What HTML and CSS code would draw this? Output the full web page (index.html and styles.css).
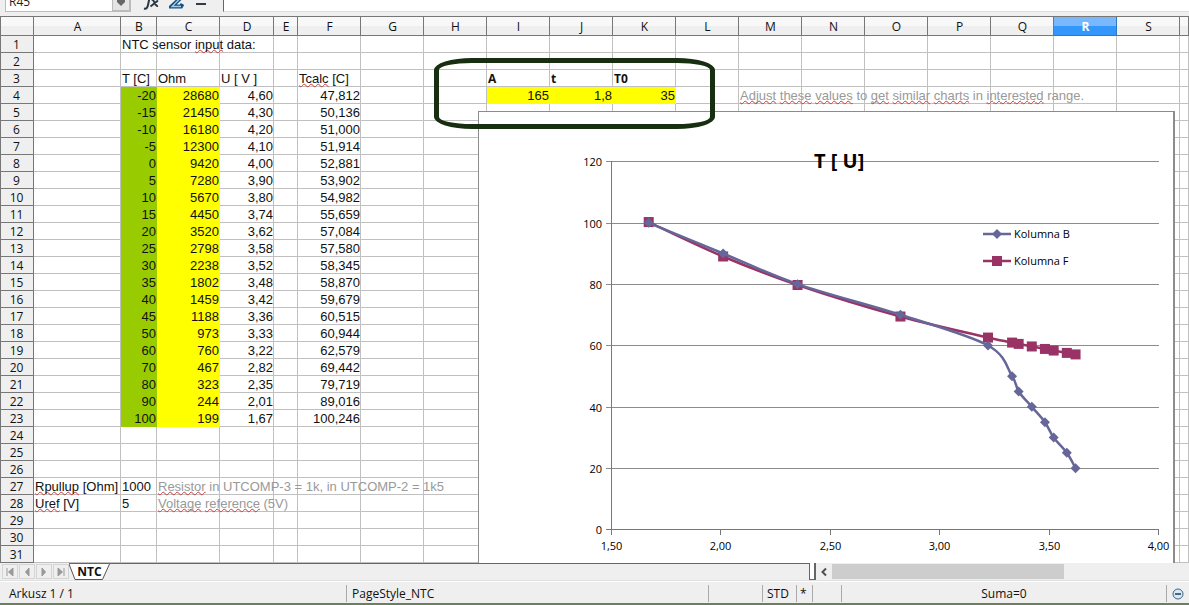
FILE: index.html
```html
<!DOCTYPE html>
<html lang="en">
<head>
<meta charset="utf-8">
<title>NTC</title>
<link rel="stylesheet" href="styles.css">
</head>
<body>
<div class="app">
  <header class="formula-bar">
    <div class="name-box">
      <input class="name-input" type="text" value="R45" aria-label="Name box">
      <button class="name-arrow" type="button" aria-label="Choose range">
        <svg width="16" height="22" viewBox="0 0 16 22"><path d="M4 8h8v2l-4 4-4-4z" fill="#666"/></svg>
      </button>
    </div>
    <button class="tool tool-fx" type="button" aria-label="Function wizard">
      <svg width="18" height="20" viewBox="0 0 18 20"><path d="M2 16.500c2.500.8 3.500-1 4-3.500l1.600-7.500c.5-2 1.500-3 3.500-2.500" fill="none" stroke="#2b3947" stroke-width="2"/><path d="M9.500 8c3-1.500 3 7 6.500 6M16 8.500l-7.500 6" fill="none" stroke="#2b3947" stroke-width="2"/></svg>
    </button>
    <button class="tool tool-sum" type="button" aria-label="Sum">
      <svg width="16" height="20" viewBox="0 0 16 20"><path d="M13 1H4l6 6.500-7.500 7H12l1.500-2.500" fill="none" stroke="#17507f" stroke-width="4"/><path d="M13 1H4l6 6.500-7 7h9" fill="none" stroke="#9fcdea" stroke-width="1.300"/></svg>
    </button>
    <button class="tool tool-eq" type="button" aria-label="Function">
      <svg width="12" height="20" viewBox="0 0 12 20"><path d="M1 7h10M1 12h10" stroke="#333b45" stroke-width="2"/></svg>
    </button>
    <input class="formula-input" type="text" aria-label="Input line">
  </header>

  <main class="sheet">
    <table class="grid">
      <colgroup>
        <col class="c-head"><col class="c-a"><col class="c-b"><col class="c-std"><col class="c-d"><col class="c-e">
        <col class="c-std" span="14"><col>
      </colgroup>
      <thead><tr id="columns"></tr></thead>
      <tbody id="rows"></tbody>
    </table>
    <svg class="chart" id="chart" viewBox="478 111 697 452" role="img" aria-label="T [ U] chart"></svg>
    <div class="marker-outline"></div>
  </main>

  <nav class="tab-bar">
    <div class="tab-nav">
      <button type="button" aria-label="First sheet"><svg width="14" height="14" viewBox="0 0 14 14"><path d="M4 3v8M10 3v8L5.500 7z"/></svg></button>
      <button type="button" aria-label="Previous sheet"><svg width="14" height="14" viewBox="0 0 14 14"><path d="M9 3v8L5.500 7z"/></svg></button>
      <button type="button" aria-label="Next sheet"><svg width="14" height="14" viewBox="0 0 14 14"><path d="M5 3v8l3.500-4z"/></svg></button>
      <button type="button" aria-label="Last sheet"><svg width="14" height="14" viewBox="0 0 14 14"><path d="M10 3v8M4 3v8l4.500-4z"/></svg></button>
    </div>
    <div class="tabs">
      <button class="tab" type="button">
        <svg class="tab-shape" width="41" height="17" viewBox="0 0 41 17"><path d="M0 0l6 15.500h27.500L40.500 0" fill="#fff" stroke="#555"/></svg>
        <span class="tab-label">NTC</span>
      </button>
    </div>
    <div class="splitter"></div>
    <button class="scroll-left" type="button" aria-label="Scroll left"><svg width="8" height="10" viewBox="0 0 8 10"><path d="M6 1.500L2.500 5 6 8.500" fill="none" stroke="#505050" stroke-width="2"/></svg></button>
    <div class="scroll-track"><div class="scroll-thumb"></div></div>
  </nav>

  <footer class="status">
    <span class="st st-sheet">Arkusz 1 / 1</span>
    <span class="st">PageStyle_NTC</span>
    <span class="st"></span>
    <span class="st st-mode">STD</span>
    <span class="st st-mod">*</span>
    <span class="st"></span>
    <span class="st st-sum">Suma=0</span>
    <span class="st st-zoom">
      <button class="zoom-out" type="button" aria-label="Zoom out"><svg width="12" height="12" viewBox="0 0 12 12"><circle cx="6" cy="6" r="5" fill="#d5e9f7" stroke="#45627e"/><path d="M3 6h6" stroke="#1c3c5a" stroke-width="1.500"/></svg></button>
      <i class="zoom-line"></i>
    </span>
  </footer>
  <div class="desktop-edge"></div>
</div>
<script src="script.js"></script>
</body>
</html>
```
FILE: styles.css
```css
* { box-sizing: border-box; }
body {
  margin: 0;
  background: #efefef;
  color: #111;
  font-family: "Open Sans", "Noto Sans", sans-serif;
  font-size: 12px;
}
button { margin: 0; padding: 0; border: 0; background: none; font: inherit; color: inherit; }
svg { display: block; }
.app { display: flex; flex-direction: column; min-height: 100vh; overflow: hidden; }

/* formula bar */
.formula-bar {
  display: flex;
  align-items: flex-end;
  height: 17px;
  padding: 0 0 4px 5px;
  border-bottom: 1px solid #777;
  background: #efefef;
  overflow: hidden;
}
.name-box { display: flex; width: 126px; height: 22px; border: 1px solid #bbb; background: #fff; }
.name-input { flex: 1; min-width: 0; border: 0; padding: 0 3px; background: none; font: inherit; color: #222; }
.name-arrow { width: 18px; border: 1px solid #bbb; background: #e4e4e4; }
.tool { flex: none; height: 20px; }
.tool-fx { margin-left: 11px; }
.tool-sum { margin-left: 9px; }
.tool-eq { margin-left: 10px; }
.formula-input {
  flex: 1;
  min-width: 0;
  height: 22px;
  margin-left: 16px;
  border: 0;
  border-left: 1px solid #666;
  border-bottom: 1px solid #ddd;
  background: #fff;
}

/* sheet */
.sheet { position: relative; overflow: hidden; background: #fff; }
.grid {
  width: 100%;
  table-layout: fixed;
  border-collapse: separate;
  border-spacing: 0;
  font-family: "Liberation Sans", Arial, sans-serif;
  font-size: 13px;
  line-height: 15px;
}
.c-head { width: 34px; }
.c-a { width: 87px; }
.c-b { width: 36px; }
.c-std { width: 63px; }
.c-d { width: 54px; }
.c-e { width: 24px; }
.grid th, .grid td { padding: 1px 1px 0; height: 17px; white-space: nowrap; border-right: 1px solid #c0c0c0; border-bottom: 1px solid #c0c0c0; text-align: left; }
.grid th { padding-left: 2px; font-family: "Open Sans", "Noto Sans", sans-serif; font-size: 12px; font-weight: 400; text-align: center; border-color: #777; background: #efefef; }
.grid thead th { height: 19px; background: linear-gradient(#f8f8f8 50%, #efefef 50%); }
.grid thead th.selected { background: linear-gradient(#79b8fd 50%, #3296fb 50%); border-color: #2a78c8; color: #fff; font-weight: 700; }
.grid th:first-child { padding-left: 0; border-left: 1px solid #777; }
.grid td.num { text-align: right; }
.grid td.green { background: #99cc00; border-color: #99cc00; }
.grid td.yellow { background: #ffff00; border-color: #ffff00; }
.grid td.num { padding-right: 0; }
.grid td.note { color: #999; }
.grid td.bold { font-family: "Open Sans", "Noto Sans", sans-serif; font-size: 12px; font-weight: 700; }
.misspelt {
  text-decoration: underline wavy #c43c3c 1px;
  text-decoration-skip-ink: none;
  text-underline-offset: 0;
}

/* objects floating over the cells */
.chart { position: absolute; left: 478px; top: 94px; width: 697px; height: 452px; }
.marker-outline {
  position: absolute;
  left: 434px;
  top: 41px;
  width: 281px;
  height: 71px;
  border: 5px solid #182e10;
  border-radius: 38px / 12px;
}
.chart-frame { fill: #fff; stroke: #8c8c8c; }
.chart-line { stroke: #8c8c8c; fill: none; }
.chart-axis { stroke: #777; fill: none; }
.chart-text { font-family: "Open Sans", "Noto Sans", sans-serif; font-size: 11px; fill: #000; }
.chart-title { font-family: "Open Sans", "Noto Sans", sans-serif; font-size: 20px; font-weight: 700; fill: #000; }
.at-end { text-anchor: end; }
.at-middle { text-anchor: middle; }
.line-b, .line-f { fill: none; stroke-width: 2.5; }
.line-b { stroke: #666699; }
.line-f { stroke: #993366; }
.mark-b { fill: #666699; }
.mark-f { fill: #993366; }

/* sheet tabs and scroll bar */
.tab-bar { display: flex; height: 18px; border-bottom: 1px solid #e0e0e0; }
.tab-nav { display: flex; gap: 1px; padding: 1px 0 0 2px; }
.tab-nav button { width: 16px; height: 15px; border: 1px solid #d4d4d4; }
.tab-nav path { fill: #999; stroke: #999; }
.tabs { flex: 740; border-top: 1px solid #666; min-width: 60px; }
.tab { display: grid; width: 41px; height: 16px; }
.tab-shape, .tab-label { grid-area: 1 / 1; }
.tab-label { z-index: 1; font-weight: 700; line-height: 16px; text-align: center; }
.splitter { width: 7px; height: 17px; border: 1px solid #666; border-right-width: 2px; border-top: 0; background: #fff; }
.scroll-left { width: 16px; padding: 0 0 0 4px; }
.scroll-track { flex: 357; padding: 1px 0; }
.scroll-thumb { width: 65%; height: 15px; background: #cdcdcd; }

/* status bar */
.status {
  display: grid;
  grid-template-columns: 346fr 362fr 54px 34px 16px 29px 325fr 23px;
  height: 22px;
  padding: 3px 0;
  border-top: 1px solid #fff;
  line-height: 17px;
}
.st { border-left: 1px solid #aaa; white-space: nowrap; padding-left: 5px; }
.st-sheet { border: 0; padding-left: 9px; }
.st-mode { padding-left: 4px; }
.st-mod { padding-left: 3px; }
.st-sum { padding: 0; text-align: center; }
.st-zoom { display: flex; align-items: center; gap: 5px; overflow: hidden; }
.zoom-line { flex: none; width: 10px; height: 2px; background: #888; }
.desktop-edge { flex: 1; min-height: 2px; background: #6b7f5d; }
```
FILE: script.js
```js
const columns = ["A", "B", "C", "D", "E", "F", "G", "H", "I", "J", "K", "L", "M", "N", "O", "P", "Q", "R", "S", ""];
const readings = [
  [-20, "28680", "4,60", "47,812"], [-15, "21450", "4,30", "50,136"],
  [-10, "16180", "4,20", "51,000"], [-5, "12300", "4,10", "51,914"],
  [0, "9420", "4,00", "52,881"], [5, "7280", "3,90", "53,902"],
  [10, "5670", "3,80", "54,982"], [15, "4450", "3,74", "55,659"],
  [20, "3520", "3,62", "57,084"], [25, "2798", "3,58", "57,580"],
  [30, "2238", "3,52", "58,345"], [35, "1802", "3,48", "58,870"],
  [40, "1459", "3,42", "59,679"], [45, "1188", "3,36", "60,515"],
  [50, "973", "3,33", "60,944"], [60, "760", "3,22", "62,579"],
  [70, "467", "2,82", "69,442"], [80, "323", "2,35", "79,719"],
  [90, "244", "2,01", "89,016"], [100, "199", "1,67", "100,246"]
];

/* Words between underscores carry the spelling mark. */
const cells = {
  B1: ["NTC sensor _input_ data:"],
  B3: ["T [C]"], C3: ["Ohm"], D3: ["U [ V ]"], F3: ["_Tcalc_ [C]"],
  I3: ["A", "bold"], J3: ["t", "bold"], K3: ["T0", "bold"],
  I4: ["165", "num yellow"], J4: ["1,8", "num yellow"], K4: ["35", "num yellow"],
  M4: ["_Adjust_ _these_ _values_ to _get_ _similar_ _charts_ in _interested_ range.", "note"],
  A27: ["_Rpullup_ [Ohm]"], B27: ["1000"], C27: ["_Resistor_ in UTCOMP-3 = 1k, in UTCOMP-2 = 1k5", "note"],
  A28: ["_Uref_ [V]"], B28: ["5"], C28: ["_Voltage_ _reference_ (5V)", "note"]
};
readings.forEach(([t, ohm, u, calc], i) => {
  const row = i + 4;
  cells["B" + row] = [String(t), "num green"];
  cells["C" + row] = [ohm, "num yellow"];
  cells["D" + row] = [u, "num"];
  cells["F" + row] = [calc, "num"];
});

document.getElementById("columns").innerHTML = "<th></th>" +
  columns.map(c => `<th scope="col"${c === "R" ? ' class="selected"' : ""}>${c}</th>`).join("");

let body = "";
for (let row = 1; row <= 31; row++) {
  body += `<tr><th scope="row">${row}</th>`;
  for (const c of columns) {
    const [text, cls] = cells[c + row] || ["", ""];
    body += `<td class="${cls || ""}">${text.replace(/_(\w+)_/g, '<span class="misspelt">$1</span>')}</td>`;
  }
  body += "</tr>";
}
document.getElementById("rows").innerHTML = body;

/* Chart */
const px = u => 611.5 + (u - 1.5) * 218.9;
const py = t => 529.5 - t * 3.067;
const number = s => parseFloat(s.replace(",", "."));
const charted = readings.slice(8).reverse();
const pointsB = charted.map(r => [px(number(r[2])), py(r[0])]);
const pointsF = charted.map(r => [px(number(r[2])), py(number(r[3]))]);

function smooth(p) {
  let d = `M${p[0]}`;
  for (let i = 0; i < p.length - 1; i++) {
    const a = p[i - 1] || p[i], b = p[i], c = p[i + 1], e = p[i + 2] || c;
    d += `C${b[0] + (c[0] - a[0]) / 6},${b[1] + (c[1] - a[1]) / 6} ${c[0] - (e[0] - b[0]) / 6},${c[1] - (e[1] - b[1]) / 6} ${c}`;
  }
  return d;
}
const square = ([x, y]) => `<rect class="mark-f" x="${x - 5}" y="${y - 5}" width="10" height="10"/>`;
const diamond = ([x, y]) => `<path class="mark-b" d="M${x} ${y - 5}l5 5-5 5-5-5z"/>`;

let svg = '<rect class="chart-frame" x="478.5" y="111.5" width="696" height="470"/><path class="chart-line" d="M1173.500 112V563"/>';
for (let t = 0; t <= 120; t += 20) {
  const y = Math.round(py(t)) + 0.5 - (t % 40 ? 0 : 1) * (t === 0 ? 1 : 0);
  svg += `<path class="chart-line" d="M606 ${y}H1159"/><text class="chart-text at-end" x="602" y="${y + 4}">${t}</text>`;
}
for (let i = 0; i <= 5; i++) {
  const u = 1.5 + i / 2, x = Math.floor(px(u)) + 0.5;
  svg += `<path class="chart-axis" d="M${x} 529v6"/><text class="chart-text at-middle" x="${x}" y="550">${u.toFixed(2).replace(".", ",")}</text>`;
}
svg += '<path class="chart-axis" d="M611.500 161V530M606 529.500H1159"/>';
svg += '<text class="chart-title" x="814" y="168">T [ U]</text>';
svg += `<path class="line-f" d="${smooth(pointsF)}"/>${pointsF.map(square).join("")}`;
svg += `<path class="line-b" d="${smooth(pointsB)}"/>${pointsB.map(diamond).join("")}`;
svg += `<path class="line-b" d="M983 234H1011"/>${diamond([997, 234])}<text class="chart-text" x="1014" y="238">Kolumna B</text>`;
svg += `<path class="line-f" d="M983 261H1011"/>${square([997, 261])}<text class="chart-text" x="1014" y="265">Kolumna F</text>`;
document.getElementById("chart").innerHTML = svg;
```
